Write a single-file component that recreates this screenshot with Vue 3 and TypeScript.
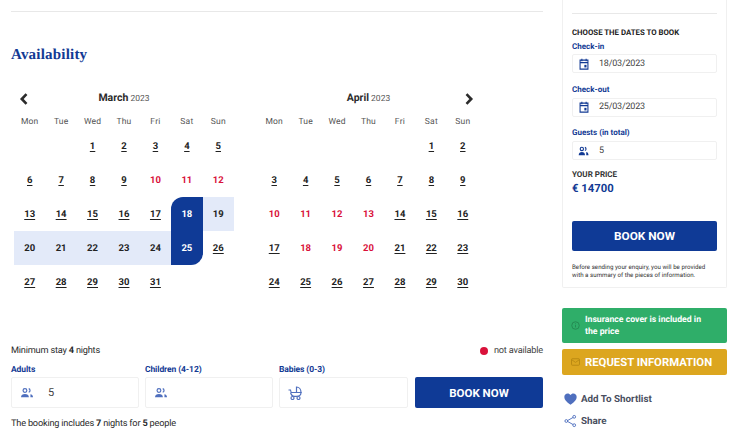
<script setup lang="ts">
const weekdays = ['Mon', 'Tue', 'Wed', 'Thu', 'Fri', 'Sat', 'Sun']

interface Month {
  name: string
  lead: number
  days: number
  red: number[]
  plain: number[]
  nav: 'prev' | 'next'
}

const months: Month[] = [
  { name: 'March', lead: 2, days: 31, red: [10, 11, 12], plain: [19, 20, 21, 22, 23, 24], nav: 'prev' },
  { name: 'April', lead: 5, days: 30, red: [10, 11, 12, 13, 18, 19, 20], plain: [], nav: 'next' }
]

function cells(m: Month) {
  const out: { key: string; day: number | null; cls: string }[] = []
  for (let i = 0; i < m.lead; i++) out.push({ key: 'e' + i, day: null, cls: '' })
  for (let d = 1; d <= m.days; d++) {
    let cls = ''
    if (m.red.includes(d)) cls = 'red'
    else if (m.name === 'March' && d === 18) cls = 'start'
    else if (m.name === 'March' && d === 25) cls = 'end'
    else if (m.plain.includes(d)) cls = 'range'
    out.push({ key: 'd' + d, day: d, cls })
  }
  return out
}

const parties = [
  { label: 'Adults', value: '5', icon: 'people' },
  { label: 'Children (4-12)', value: '', icon: 'people' },
  { label: 'Babies (0-3)', value: '', icon: 'pram' }
]
</script>

<template>
  <div class="page">
    <main class="left">
      <hr class="rule" />
      <h2 class="title">Availability</h2>
      <div class="calendars">
        <section v-for="m in months" :key="m.name" class="month">
          <header class="month-head" :class="m.nav">
            <svg class="chev" viewBox="0 0 10 12" width="10" height="12">
              <path v-if="m.nav === 'prev'" d="M7.5 1.2 2.8 6l4.7 4.8" fill="none" stroke="#2b2b2b" stroke-width="2.6" />
              <path v-else d="M2.5 1.2 7.2 6l-4.7 4.8" fill="none" stroke="#2b2b2b" stroke-width="2.6" />
            </svg>
            <div class="month-name"><b>{{ m.name }}</b> <span>2023</span></div>
          </header>
          <div class="weekdays">
            <span v-for="w in weekdays" :key="w">{{ w }}</span>
          </div>
          <div class="days">
            <span v-for="c in cells(m)" :key="c.key" class="day" :class="c.cls">{{ c.day }}</span>
          </div>
        </section>
      </div>
      <div class="stay-row">
        <span>Minimum stay <b>4</b> nights</span>
        <span class="legend"><i class="dot"></i>not available</span>
      </div>
      <div class="party-row">
        <div v-for="p in parties" :key="p.label" class="party">
          <label>{{ p.label }}</label>
          <div class="party-box">
            <svg v-if="p.icon === 'people'" class="lite" viewBox="0 0 16 14" width="14" height="12">
              <circle cx="5.600" cy="4" r="2.200" fill="none" stroke="currentColor" stroke-width="1.400" />
              <path d="M10 1.900a2.200 2.200 0 0 1 0 4.200" fill="none" stroke="currentColor" stroke-width="1.400" />
              <path d="M1 12c0-2.600 2-3.800 4.600-3.800s4.600 1.200 4.600 3.800z" fill="currentColor" />
              <path d="M12 8.500c1.800.4 3 1.500 3 3.500h-3" fill="currentColor" />
            </svg>
            <svg v-else class="lite" viewBox="0 0 14 14" width="14" height="14">
              <path d="M8.500 1v5.500H13C13 3.500 11.200 1 8.500 1z" fill="none" stroke="currentColor" stroke-width="1.200" />
              <path d="M.5 4H2.500c.4 2.500 1 2.500 1 2.500H13c0 2.500-2 3.800-4.500 3.800H6.500C4 10.300 3 8.500 2.500 6.500" fill="none" stroke="currentColor" stroke-width="1.200" />
              <circle cx="4.500" cy="12" r="1.500" fill="none" stroke="currentColor" stroke-width="1.200" />
              <circle cx="10.500" cy="12" r="1.500" fill="none" stroke="currentColor" stroke-width="1.200" />
            </svg>
            <span>{{ p.value }}</span>
          </div>
        </div>
        <button class="btn book-inline">BOOK NOW</button>
      </div>
      <p class="summary">The booking includes <b>7</b> nights for <b>5</b> people</p>
    </main>

    <aside class="right">
      <div class="card">
        <hr class="rule" />
        <h4 class="choose">CHOOSE THE DATES TO BOOK</h4>
        <label class="f-label">Check-in</label>
        <div class="f-box">
          <svg viewBox="0 0 14 14" width="10" height="12" class="dark" preserveAspectRatio="none">
            <path d="M1.500 2.500h11v10.500h-11zM1.500 5.500h11M4 .8v3M10 .8v3" fill="none" stroke="currentColor" stroke-width="1.500" />
            <rect x="7.500" y="8" width="3" height="3" fill="currentColor" />
          </svg>
          <span>18/03/2023</span>
        </div>
        <label class="f-label gap">Check-out</label>
        <div class="f-box">
          <svg viewBox="0 0 14 14" width="10" height="12" class="dark" preserveAspectRatio="none">
            <path d="M1.500 2.500h11v10.500h-11zM1.500 5.500h11M4 .8v3M10 .8v3" fill="none" stroke="currentColor" stroke-width="1.500" />
            <rect x="7.500" y="8" width="3" height="3" fill="currentColor" />
          </svg>
          <span>25/03/2023</span>
        </div>
        <label class="f-label gap">Guests (in total)</label>
        <div class="f-box">
          <svg viewBox="0 0 16 14" width="11" height="10" class="dark guests-icon">
            <circle cx="5.600" cy="4" r="2.400" fill="none" stroke="currentColor" stroke-width="1.600" />
            <path d="M10 1.700a2.400 2.400 0 0 1 0 4.600" fill="none" stroke="currentColor" stroke-width="1.600" />
            <path d="M1 13c0-3 2-4.500 4.600-4.500s4.600 1.500 4.600 4.500z" fill="currentColor" />
            <path d="M12 8.500c2 .4 3.200 2 3.200 4.500H12z" fill="currentColor" />
          </svg>
          <span>5</span>
        </div>
        <h4 class="price-label">YOUR PRICE</h4>
        <div class="price">€ 14700</div>
        <button class="btn book-side">BOOK NOW</button>
        <p class="note">Before sending your enquiry, you will be provided with a summary of the pieces of information.</p>
      </div>

      <div class="notice green">
        <svg viewBox="0 0 12 12" width="9" height="9">
          <circle cx="6" cy="6" r="5" fill="none" stroke="#248a52" stroke-width="1.300" />
          <path d="M6 5.200v3.300M6 3.200v1" stroke="#248a52" stroke-width="1.300" />
        </svg>
        <span>Insurance cover is included in the price</span>
      </div>
      <div class="notice yellow">
        <svg viewBox="0 0 12 10" width="9" height="8">
          <rect x=".7" y=".7" width="10.600" height="8.600" rx="1" fill="none" stroke="#b98a12" stroke-width="1.300" />
          <path d="M1 2l5 3.500L11 2" fill="none" stroke="#b98a12" stroke-width="1.200" />
        </svg>
        <span>REQUEST INFORMATION</span>
      </div>
      <a class="action first">
        <svg viewBox="0 0 14 13" width="13" height="12">
          <path d="M7 12.800C2.500 9.300 .3 7 .3 4.200.3 2 2 .5 3.900.5 5.200.5 6.300 1.200 7 2.300 7.700 1.200 8.800.5 10.100.5 12 .5 13.700 2 13.700 4.200c0 2.800-2.200 5.100-6.700 8.600z" fill="#4f6fbe" />
        </svg>
        <span>Add To Shortlist</span>
      </a>
      <a class="action">
        <svg viewBox="0 0 14 14" width="13" height="14">
          <path d="M11 2.500 3 7l8 4.500" fill="none" stroke="#4f6fbe" stroke-width="1" />
          <circle cx="11" cy="2.500" r="1.500" fill="#fff" stroke="#4f6fbe" />
          <circle cx="2.500" cy="7" r="1.500" fill="#fff" stroke="#4f6fbe" />
          <circle cx="11" cy="11.500" r="1.500" fill="#fff" stroke="#4f6fbe" />
        </svg>
        <span>Share</span>
      </a>
    </aside>
  </div>
</template>

<style>
html, body { margin: 0; background: #fff; overflow: hidden; }
</style>

<style scoped>
.page {
  display: flex;
  width: 735px;
  height: 446px;
  overflow: hidden;
  box-sizing: border-box;
  padding-left: 11px;
  font-family: Roboto, Lato, sans-serif;
  text-rendering: geometricPrecision;
  color: #2b2b2b;
  background: #fff;
}
.left { width: 532px; flex: none; }
.rule { border: 0; border-top: 1px solid #e8e8e8; margin: 11px 0 0; }
.title {
  margin: 33px 0 0;
  font: 700 15px/20px "Liberation Serif", serif;
  color: #123a94;
  letter-spacing: .2px;
}
.calendars { display: flex; gap: 24.500px; margin: 22px 0 0 3px; }
.month { width: 220px; }
.month-head { position: relative; height: 20px; text-align: center; }
.month-name { font-size: 8.500px; line-height: 16px; color: #555; padding-top: 3px; }
.month-name b { font-size: 10.500px; font-weight: 700; color: #2b2b2b; }
.chev { position: absolute; top: 6px; }
.prev .chev { left: 5px; }
.next .chev { right: 5px; }
.weekdays {
  display: grid;
  grid-template-columns: repeat(7, 1fr);
  margin-top: 8px;
  font-size: 8.500px;
  line-height: 14px;
  text-align: center;
  color: #555;
  letter-spacing: .2px;
}
.days {
  display: grid;
  grid-template-columns: repeat(7, 1fr);
  grid-auto-rows: 34px;
}
.day {
  display: flex;
  align-items: center;
  justify-content: center;
  font-size: 9.500px;
  font-weight: 700;
  color: #222;
  text-decoration: underline;
  text-underline-offset: 2px;
}
.day.red { color: #d9113a; text-decoration: none; }
.day.range { background: #e3eaf9; text-decoration: none; }
.day.start, .day.end { background: #0f3a96; color: #fff; text-decoration: none; }
.day.start { border-top-left-radius: 12px; }
.day.end { border-bottom-right-radius: 12px; }

.stay-row {
  display: flex;
  justify-content: space-between;
  margin-top: 45px;
  font-size: 9.200px;
  letter-spacing: -.2px;
  line-height: 14px;
}
.stay-row b { font-weight: 700; }
.legend { display: flex; align-items: center; gap: 6px; color: #444; }
.dot { width: 8px; height: 8px; border-radius: 50%; background: #d9113a; }
.party-row { display: grid; grid-template-columns: 128px 128px 129px 1fr; gap: 6px; margin-top: 5px; align-items: end; }
.party-row .book-inline { margin-left: 1px; }
.party label { display: block; font-size: 8.500px; font-weight: 700; letter-spacing: -.1px; line-height: 14px; color: #123a94; }
.party-box {
  display: flex;
  align-items: center;
  gap: 14px;
  height: 31px;
  box-sizing: border-box;
  padding-left: 8px;
  border: 1px solid #f0f0f0;
  border-radius: 2px;
  font-size: 11px;
  color: #444;
}
.lite { color: #4f6fbe; flex: none; }
.dark { color: #123a94; flex: none; }
.btn {
  display: block;
  border: 0;
  border-radius: 2px;
  background: #0f3a96;
  color: #fff;
  font-family: inherit;
  font-weight: 700;
  font-size: 11.500px;
  padding: 0;
}
.book-inline { height: 31px; }
.summary { margin: 9px 0 0; font-size: 9.200px; letter-spacing: -.2px; line-height: 14px; }
.summary b { font-weight: 700; }

.right { width: 165px; margin-left: 19px; flex: none; }
.card {
  display: flow-root;
  box-sizing: border-box;
  height: 288px;
  padding: 0 9px;
  border: 1px solid #f0f0f0;
  border-top: 0;
  border-radius: 0 0 2px 2px;
}
.card .rule { margin-top: 13px; }
.choose { margin: 13px 0 0; font-size: 7.800px; font-weight: 700; line-height: 11px; color: #222; }
.f-label { display: block; font-size: 8px; font-weight: 700; line-height: 11px; color: #123a94; }
.choose + .f-label { margin-top: 3px; }
.f-label.gap { margin-top: 10.500px; margin-bottom: 3px; }
.f-box {
  display: flex;
  align-items: center;
  gap: 10px;
  height: 19px;
  margin-top: 2px;
  box-sizing: border-box;
  padding-left: 6px;
  border: 1px solid #f0f0f0;
  border-radius: 2px;
  font-size: 9px;
  letter-spacing: -.2px;
  color: #444;
}
.guests-icon { margin-left: -1px; }
.f-label.gap + .f-box { margin-top: 0; }
.price-label { margin: 9px 0 0; font-size: 8px; font-weight: 700; line-height: 11px; color: #333; }
.price { margin-top: 1px; font-size: 11.300px; font-weight: 700; line-height: 16px; color: #123a94; }
.book-side { width: 100%; height: 30px; margin-top: 24px; font-size: 11.800px; }
.note { margin: 12px 0 0; font-size: 6.200px; line-height: 8px; color: #333; }
.notice {
  display: flex;
  align-items: center;
  gap: 5px;
  box-sizing: border-box;
  padding-left: 9px;
  border-radius: 2px;
  color: #fff;
  font-weight: 700;
}
.notice svg { flex: none; }
.green { background: #2fae69; height: 35px; margin-top: 20px; font-size: 8.700px; line-height: 12px; padding-right: 20px; }
.yellow { background: #dca61f; height: 26px; margin-top: 6px; font-size: 11.300px; }
.action {
  display: flex;
  align-items: center;
  gap: 4px;
  height: 14px;
  padding-left: 2px;
  margin-top: 8px;
  font-size: 9.800px;
  font-weight: 700;
  color: #4a4f60;
}
.action.first { margin-top: 17px; }
</style>
